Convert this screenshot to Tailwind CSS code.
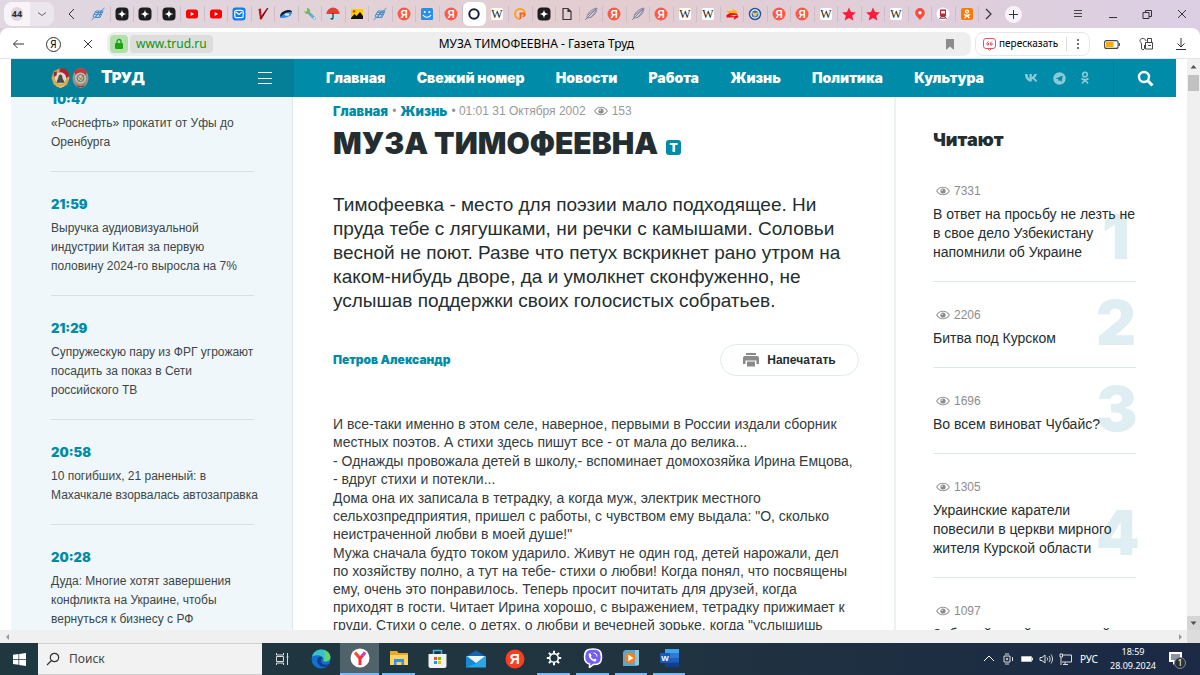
<!DOCTYPE html>
<html lang="ru">
<head>
  <meta charset="UTF-8">
  <meta name="viewport" content="width=device-width, initial-scale=1.0">
  <title>МУЗА ТИМОФЕЕВНА - Газета Труд</title>
  <script src="https://cdn.jsdelivr.net/npm/@tailwindcss/browser@4"></script>
</head>
<body class="flex h-screen flex-col overflow-hidden bg-[#dccbdc] font-['Liberation_Sans',sans-serif] text-[#242e30]">

  <!-- Иконки -->
  <svg class="hidden" xmlns="http://www.w3.org/2000/svg">
    <symbol id="i-sketch" viewBox="0 0 16 16"><g fill="none" stroke="#4a8ecb" stroke-width="1"><path d="M1.500 14 14.500 2M3 10l3-5h7l-3 6.500H4zM4 8.500h7M5 6.500h7M6 11l3-6M8.500 11.500l3-6"/></g></symbol>
    <symbol id="i-star4" viewBox="0 0 16 16"><rect x="1.500" y="1.500" width="13" height="13" rx="4" fill="#1d1d1f"/><path d="M8 3.500c.4 3 1.500 4.100 4.500 4.500-3 .4-4.100 1.500-4.500 4.500-.4-3-1.500-4.100-4.500-4.500 3-.4 4.100-1.500 4.500-4.500z" fill="#fff"/></symbol>
    <symbol id="i-youtube" viewBox="0 0 16 16"><rect x="2" y="3.500" width="12" height="9" rx="2.500" fill="#f00"/><path d="M6.700 6v4l3.300-2z" fill="#fff"/></symbol>
    <symbol id="i-mailru" viewBox="0 0 16 16"><rect x="1.500" y="1.500" width="13" height="13" rx="3" fill="#0a7cff"/><rect x="3.800" y="4.300" width="8.400" height="7.400" rx="1.500" fill="none" stroke="#fff" stroke-width="1.200"/><path d="m5 6 3 2.500L11 6" fill="none" stroke="#fff" stroke-width="1.200"/></symbol>
    <symbol id="i-v" viewBox="0 0 16 16"><path d="m3.500 3 2.500-.5.500 7L12 2l1 .5L6.500 13.500H5z" fill="#c01624"/><path d="M5.500 13 13 2" stroke="#5c0f16"/></symbol>
    <symbol id="i-whale" viewBox="0 0 16 16"><path d="M2 11c0-5 5-7 9-7 2 0 3 1 3 2-3 0-7 3-12 5z" fill="#0d1b33"/><path d="M2 12c3-5 7-6 12-6 0 4-5 6-12 6z" fill="#2b8df2"/><ellipse cx="9" cy="8.500" rx="2.500" ry="1.200" fill="#d7ecff"/></symbol>
    <symbol id="i-wrench" viewBox="0 0 16 16"><path d="m6 6 6.500 6.500" stroke="#5ab0d3" stroke-width="2.800" stroke-linecap="round"/><path d="M5 2v3L3.500 6 2.500 4.500C2 7 4 8.500 6 8l2-2c.5-2-1-4-3-4z" fill="#7bb84e"/><circle cx="12.300" cy="12.300" r="1" fill="#f3f3f3"/></symbol>
    <symbol id="i-umbrella" viewBox="0 0 16 16"><circle cx="8" cy="8" r="6.500" fill="#bfe3ee"/><path d="M1.500 8a6.500 6.500 0 0 1 13 0z" fill="#e5402e"/><path d="M8 7v5c0 1.500-2 1.500-2 0" fill="none" stroke="#3b2a2a" stroke-width="1.200"/></symbol>
    <symbol id="i-photo" viewBox="0 0 16 16"><rect x="2" y="3" width="12" height="10" fill="#ffcb00"/><path d="m2 12 3.500-4 2 2L11 6l3 4v3H2z" fill="#111"/><circle cx="5" cy="5.500" r="1.300" fill="#e33"/></symbol>
    <symbol id="i-ya" viewBox="0 0 16 16"><circle cx="8" cy="8" r="6.500" fill="#fc5a45"/><text x="8" y="11.500" text-anchor="middle" font-family="Liberation Sans" font-size="10" font-weight="700" fill="#fff">Я</text></symbol>
    <symbol id="i-smile" viewBox="0 0 16 16"><rect x="2" y="2" width="12" height="12" rx="1.500" fill="#2a8fe6"/><circle cx="5.700" cy="6" r="1" fill="#fff"/><circle cx="10.300" cy="6" r="1" fill="#fff"/><path d="M4 9c2 3 6 3 8 0" fill="none" stroke="#fff" stroke-width="1.200"/></symbol>
    <symbol id="i-ring" viewBox="0 0 16 16"><circle cx="8" cy="8" r="4.700" fill="none" stroke="#182235" stroke-width="2"/></symbol>
    <symbol id="i-wiki" viewBox="0 0 16 16"><rect x="2" y="2" width="12" height="12" rx="2" fill="#fff"/><text x="8" y="12" text-anchor="middle" font-family="Liberation Serif" font-size="12" fill="#222">W</text></symbol>
    <symbol id="i-q" viewBox="0 0 16 16"><path d="M13 7.500A5 5 0 1 0 8 13" fill="none" stroke="#ffa01f" stroke-width="2"/><path d="M13 7.500H8.500V13" fill="none" stroke="#f2641b" stroke-width="1.800"/><path d="M13 7.500c0 2.500-1 3-2.500 3" fill="none" stroke="#f2641b" stroke-width="1.600"/></symbol>
    <symbol id="i-page" viewBox="0 0 16 16"><path d="M4 2.500h5l3 3v8H4zM9 2.500v3h3" fill="none" stroke="#3c3540" stroke-width="1.200"/></symbol>
    <symbol id="i-feather" viewBox="0 0 16 16"><path d="M2 14 13 3M4 12c-.5-4 4-9 10-10-.5 6-5 10-10 10zM5 9c2-2 5-4 8-6M7 12c2-2 5-5 6-8" fill="none" stroke="#77809f" stroke-width=".9"/></symbol>
    <symbol id="i-swoosh" viewBox="0 0 16 16"><path d="M2 5h7l-1-2.500L14 6l-4 2H6z" fill="#ffb400"/><path d="M14 9H6l4 1-4 1.500H2.500V9L6 7l7 .5 1.500 3.500-5 3 1-2.500H6z" fill="#e8111a"/></symbol>
    <symbol id="i-emblem" viewBox="0 0 16 16"><circle cx="8" cy="8" r="5.500" fill="#fff" stroke="#24539b" stroke-width="1.500"/><circle cx="8" cy="8" r="3.500" fill="#3b6db5"/><path d="m5 6 3 1 3-1-1 3-2 2-2-2z" fill="#e9c46a"/></symbol>
    <symbol id="i-star" viewBox="0 0 16 16"><path d="m8 1.500 2 4.600 4.900.4-3.700 3.200 1.100 4.800L8 12l-4.300 2.500 1.100-4.800L1.100 6.500 6 6.100z" fill="#fb1b3b"/></symbol>
    <symbol id="i-pin" viewBox="0 0 16 16"><path d="M8 14.500C7.500 12 3.200 10.500 3.200 6.800a4.800 4.800 0 0 1 9.600 0C12.800 10.500 8.500 12 8 14.500z" fill="#fb4a3a"/><circle cx="8" cy="6.800" r="1.700" fill="#fff"/></symbol>
    <symbol id="i-train" viewBox="0 0 16 16"><circle cx="8" cy="8" r="6.500" fill="#fff"/><path d="M5 3.500h6V10l-1.200 1H6.200L5 10z" fill="#d0202e"/><path d="M6 5h4v2.500H6z" fill="#fff"/><path d="m6 11-1.500 2M10 11l1.500 2M5.500 12.200h5" stroke="#333" stroke-width=".9"/></symbol>
    <symbol id="i-ok" viewBox="0 0 16 16"><rect x="2" y="2" width="12" height="12" rx="2" fill="#ff7a00"/><g fill="none" stroke="#fff" stroke-width="1.300" stroke-linecap="round"><circle cx="8" cy="5.600" r="1.500"/><path d="M5.600 8.600c1.500 1 3.300 1 4.800 0M8 9.400l-2 2.300M8 9.400l2 2.300"/></g></symbol>
    <symbol id="i-eye" viewBox="0 0 14 10"><path d="M.7 5C3.500 0 10.500 0 13.300 5 10.500 10 3.500 10 .7 5z" fill="none" stroke="#999" stroke-width="1.100"/><circle cx="7" cy="5" r="2.600" fill="#8b8b8b"/><path d="M7 2.400V5H4.400" fill="#c9c9c9"/></symbol>
  </svg>

  <!-- Вкладки -->
  <div class="flex h-7 shrink-0 items-center bg-linear-to-r from-[#e0d8e2] via-[#e3cdd0] to-[#dccfe4]">
    <button class="ml-1 flex h-6 w-[26px] items-center justify-center rounded-l-lg bg-[#f8f4f8] font-['Open_Sans',sans-serif] text-[9px] font-bold"><span class="rounded-md bg-[#dfd7e0] px-px">44</span></button>
    <button class="flex h-6 w-6 items-center justify-center rounded-r-lg bg-[#ebe5ed]" aria-label="Список вкладок"><svg class="size-3" viewBox="0 0 12 12" fill="none" stroke="#666"><path d="m2 4.500 4 3 4-3"/></svg></button>
    <button class="flex w-[33px] justify-center" aria-label="Назад по вкладкам"><svg class="size-3" viewBox="0 0 12 12" fill="none" stroke="#333"><path d="M9 1 4 6l5 5"/></svg></button>
    <div id="tabs" class="flex min-w-0 flex-1 items-center"></div>
    <button class="flex w-5 justify-center" aria-label="Вперёд по вкладкам"><svg class="size-3" viewBox="0 0 12 12" fill="none" stroke="#333" stroke-width="1.200"><path d="m3 1 5 5-5 5"/></svg></button>
    <button class="ml-1.5 flex size-[17px] items-center justify-center rounded-full bg-[#f7f3f9]" aria-label="Новая вкладка"><svg class="size-[11px]" viewBox="0 0 11 11" stroke="#333"><path d="M1 5.500h9M5.500 1v9"/></svg></button>
    <div class="ml-[30px] flex w-[148px] items-center justify-between px-3">
      <button class="ml-2" aria-label="Меню"><svg class="size-3" viewBox="0 0 12 12" stroke="#444"><path d="M2 2.500h8M2 5.500h8M2 8.500h8"/></svg></button>
      <button aria-label="Свернуть"><svg class="size-3" viewBox="0 0 12 12" stroke="#333"><path d="M2 9.500h8"/></svg></button>
      <button aria-label="Развернуть"><svg class="size-3" viewBox="0 0 12 12" fill="none" stroke="#333"><path d="M2 4.500h6v6H2zM4.500 4.500v-2h6v6H8"/></svg></button>
      <button aria-label="Закрыть"><svg class="size-3" viewBox="0 0 12 12" stroke="#333"><path d="m2 2 8 8M10 2l-8 8"/></svg></button>
    </div>
  </div>

  <!-- Адресная строка -->
  <div class="flex h-[31px] shrink-0 items-center rounded-t-lg border-b border-[#e4e4e4] bg-white pt-0.5 pr-3 pl-3 font-['Noto_Sans',sans-serif] text-xs text-black">
    <button class="w-3.5" aria-label="Назад"><svg class="size-3.5" viewBox="0 0 14 14" fill="none" stroke="#333"><path d="M12 7H1.500M5.500 3l-4 4 4 4"/></svg></button>
    <button class="ml-5 flex size-[15px] items-center justify-center rounded-full border border-[#333] text-[10px] leading-none" aria-label="Яндекс">Я</button>
    <button class="ml-[21px]" aria-label="Остановить"><svg class="size-3" viewBox="0 0 12 12" stroke="#333"><path d="m2 2 8 8M10 2l-8 8"/></svg></button>
    <div class="ml-[13px] flex h-6 min-w-0 flex-1 items-center rounded-lg bg-[#eeeeee] px-[3px]">
      <button class="flex size-[18px] items-center justify-center rounded bg-[#b4dfac]" aria-label="Защищённое соединение"><svg class="size-3" viewBox="0 0 12 12"><rect x="2" y="5" width="8" height="6" rx="1" fill="#1aa312"/><path d="M4 5V3.500a2 2 0 0 1 4 0V5" fill="none" stroke="#1aa312" stroke-width="1.300"/></svg></button>
      <a href="#" class="ml-0.5 rounded bg-[#dddddd] px-1.5 leading-[18px] text-[#12920c]">www.trud.ru</a>
      <div class="flex-1 pr-[84px] text-center"><span>МУЗА ТИМОФЕЕВНА - Газета Труд</span></div>
      <button class="mr-3" aria-label="Закладка"><svg class="size-3" viewBox="0 0 12 12"><path d="M2 1h8v11L6 8.500 2 12z" fill="#8c8c8c"/></svg></button>
    </div>
    <div class="ml-1 flex h-6 w-[115px] items-center rounded-lg border border-[#e8e8e8] pl-[7px]">
      <svg class="size-[13px] shrink-0" viewBox="0 0 13 13" fill="none" stroke="#ef4f63"><rect x=".5" y=".5" width="12" height="10" rx="2.500"/><path d="m5 11 1.500 1.500L8 11M5.500 3.500 4 5v2h1.500V5M9 3.500 7.500 5v2H9V5"/></svg>
      <button class="ml-[3px] text-[10px]">пересказать</button>
      <button class="ml-2 flex h-3.5 flex-1 items-center justify-center border-l border-[#ddd]" aria-label="Ещё"><svg class="size-3" viewBox="0 0 12 12" fill="#333"><circle cx="6" cy="2" r=".9"/><circle cx="6" cy="6" r=".9"/><circle cx="6" cy="10" r=".9"/></svg></button>
    </div>
    <button class="ml-3.5" aria-label="Энергосбережение"><svg class="h-[9px] w-4" viewBox="0 0 16 9"><rect x=".6" y=".6" width="13.500" height="7.800" rx="2" fill="#fff" stroke="#444" stroke-width="1.100"/><rect x="2" y="2" width="7.500" height="5" fill="#ffa800"/><path d="M15.300 3v3" stroke="#444" stroke-width="1.200"/></svg></button>
    <button class="ml-[19px]" aria-label="Пароли"><svg class="size-3.5" viewBox="0 0 14 14" fill="none" stroke="#444"><path d="M7 4C7 1 1 .5 1 3.500c0 2 1.500 2 1.500 3.500v5L4 13l1.500-1.500V8M6.500 5.500h7v6.500h-7zM8.500 5.500v-4h4v4M9 8.500h3"/></svg></button>
    <button class="ml-[21px]" aria-label="Загрузки"><svg class="size-3.5" viewBox="0 0 14 14" fill="none" stroke="#333"><path d="M7 1v9M3.500 6.500 7 10l3.500-3.500M2 12.500h10"/></svg></button>
  </div>

  <!-- Страница и полоса прокрутки -->
  <div class="flex min-h-0 flex-1 bg-white">
    <div class="flex min-w-0 flex-1 flex-col px-[11px]">

      <header class="relative flex h-[38px] shrink-0 items-center bg-[#008ba8] text-white">
        <div class="flex h-full w-[283px] shrink-0 items-center bg-[#047f97] pr-[22px] pl-10">
          <svg class="h-6 w-[19px]" viewBox="0 0 20 24"><path d="M10 1.500 17 5l2.500 7L17 19l-7 3.500L3 19 .5 12 3 5z" fill="#d0ab52"/><path d="M9 2c6-1 10 3 10 8l-4 3-6-6z" fill="#b3222c"/><circle cx="10" cy="12" r="6" fill="#dcd9d2"/><path d="M6 17c0-3 2-4 2-7 1-3 4-2 4 1s2 3 2 6z" fill="#4a4a4a"/><path d="M5 18c3 3 7 3 10 0l-1 3-4 1.500L6 21z" fill="#e0bd60"/><path d="M3 6l3-1v4L3 11z" fill="#a3262a"/></svg>
          <svg class="ml-0.5 h-6 w-[17px]" viewBox="0 0 17 24"><ellipse cx="8.500" cy="12" rx="8" ry="10" fill="#9c8f86"/><path d="M2 6c3-5 10-5 13 0l-2 4-9-1z" fill="#c5383c"/><circle cx="8.500" cy="12" r="5.500" fill="#c7c3ba"/><circle cx="8.500" cy="12" r="3.500" fill="none" stroke="#4f6f86"/><path d="m5 10 7 5M12 9l-6 7" stroke="#a8862f"/><path d="M4 18c3 3 6 3 9 0l-2 3H6z" fill="#8d3236"/></svg>
          <a href="#" class="ml-3 font-['Inter',sans-serif] text-[17px] font-black tracking-tighter">Т<span class="text-[15px]">РУД</span></a>
          <button class="ml-auto" aria-label="Меню сайта"><svg class="h-3.5 w-3.5" viewBox="0 0 14 14" stroke="#fff"><path d="M0 1.500h14M0 7.500h14M0 12.500h14"/></svg></button>
        </div>
        <nav class="flex flex-1 justify-between pl-8 font-['Inter',sans-serif] text-[14px] leading-[18px] font-black">
          <a href="#">Главная</a>
          <a href="#">Свежий номер</a>
          <a href="#">Новости</a>
          <a href="#">Работа</a>
          <a href="#">Жизнь</a>
          <a href="#">Политика</a>
          <a href="#">Культура</a>
        </nav>
        <div class="flex w-[129px] items-center gap-3.5 pl-10 text-[#8ccad7]">
          <a href="#" aria-label="ВКонтакте"><svg class="h-3.5 w-[15px]" viewBox="0 0 15 14"><path d="M1 3h2.500c.3 2.500 1 4 2 4.500V3h2.300v3C9 5.700 9.800 4.500 10.500 3H13c-.4 1.500-1.500 3-2.600 3.900 1.300.8 2.400 2 3.100 3.600H11c-.6-1.300-1.500-2.200-3.200-2.500v2.500C3.500 10.700 1.200 7.800 1 3z" fill="currentColor"/></svg></a>
          <a href="#" aria-label="Telegram"><svg class="size-[13px]" viewBox="0 0 13 13"><circle cx="6.500" cy="6.500" r="6.200" fill="currentColor"/><path d="m2.800 6.400 7-2.900-1.200 6.300-2-1.500-1 1-.2-2z" fill="#008ba8"/></svg></a>
          <a href="#" aria-label="Одноклассники"><svg class="h-3.5 w-2.5" viewBox="0 0 10 14" fill="none" stroke="currentColor" stroke-width="1.600"><circle cx="5" cy="3.500" r="2.300"/><path d="M1.500 7.500c2 1.400 5 1.400 7 0M5 8.700 2 12.500M5 8.700l3 3.800"/></svg></a>
        </div>
        <button class="flex h-full w-[63px] items-center justify-center border-l border-[#047f97]" aria-label="Поиск по сайту"><svg class="size-[17px]" viewBox="0 0 17 17" fill="none" stroke="#fff"><circle cx="7" cy="7" r="5" stroke-width="2.400"/><path d="m11 11 4.500 4.500" stroke-width="3"/></svg></button>
      </header>

      <div class="flex min-h-0 flex-1 overflow-hidden">

        <!-- Лента новостей -->
        <aside class="w-[282px] shrink-0 overflow-hidden border-r border-[#d9e8ec] bg-[#f0f7fa] pr-[38px] pl-10">
          <ul class="-mt-[30px] text-xs leading-[19px] whitespace-nowrap text-[#3c4648]">
            <li class="border-b border-[#d7e0e3] pt-[22px] pb-[19px]"><time class="block h-[25px] font-['Inter',sans-serif] text-[13px] leading-5 font-black text-[#008ba8]">10:47</time><a href="#">«Роснефть» прокатит от Уфы до<br>Оренбурга</a></li>
            <li class="border-b border-[#d7e0e3] pt-[22px] pb-[19px]"><time class="block h-[25px] font-['Inter',sans-serif] text-[13px] leading-5 font-black text-[#008ba8]">21:59</time><a href="#">Выручка аудиовизуальной<br>индустрии Китая за первую<br>половину 2024-го выросла на 7%</a></li>
            <li class="border-b border-[#d7e0e3] pt-[22px] pb-[19px]"><time class="block h-[25px] font-['Inter',sans-serif] text-[13px] leading-5 font-black text-[#008ba8]">21:29</time><a href="#">Супружескую пару из ФРГ угрожают<br>посадить за показ в Сети<br>российского ТВ</a></li>
            <li class="border-b border-[#d7e0e3] pt-[22px] pb-[19px]"><time class="block h-[25px] font-['Inter',sans-serif] text-[13px] leading-5 font-black text-[#008ba8]">20:58</time><a href="#">10 погибших, 21 раненый: в<br>Махачкале взорвалась автозаправка</a></li>
            <li class="border-b border-[#d7e0e3] pt-[22px] pb-[19px]"><time class="block h-[25px] font-['Inter',sans-serif] text-[13px] leading-5 font-black text-[#008ba8]">20:28</time><a href="#">Дуда: Многие хотят завершения<br>конфликта на Украине, чтобы<br>вернуться к бизнесу с РФ</a></li>
          </ul>
        </aside>

        <!-- Статья -->
        <main class="min-w-0 flex-1 pr-[35px] pl-10">
          <div class="flex items-center pt-1 text-xs leading-5 text-[#999]">
            <a href="#" class="font-['Inter',sans-serif] text-[13px] font-black text-[#008ba8]">Главная</a>
            <span class="mx-1">•</span>
            <a href="#" class="font-['Inter',sans-serif] text-[13px] font-black text-[#008ba8]">Жизнь</a>
            <span class="ml-1">• 01:01 31 Октября 2002</span>
            <svg class="ml-2 h-2.5 w-3.5"><use href="#i-eye"/></svg>
            <span class="ml-1">153</span>
          </div>
          <h1 class="mt-1 flex items-end font-['Inter',sans-serif] text-[30px] leading-9 font-black whitespace-nowrap">МУЗА ТИМОФЕЕВНА
            <svg class="mb-1.5 ml-2 size-[15px]" viewBox="0 0 15 15"><rect width="15" height="15" rx="3" fill="#008ba8"/><text x="7.500" y="12" text-anchor="middle" font-family="Inter" font-size="12" font-weight="900" fill="#fff">Т</text></svg>
          </h1>
          <p class="mt-8 text-[19px] leading-6 whitespace-nowrap">Тимофеевка - место для поэзии мало подходящее. Ни<br>пруда тебе с лягушками, ни речки с камышами. Соловьи<br>весной не поют. Разве что петух вскрикнет рано утром на<br>каком-нибудь дворе, да и умолкнет сконфуженно, не<br>услышав поддержки своих голосистых собратьев.</p>
          <div class="mt-[31px] flex items-center justify-between">
            <a href="#" class="font-['Inter',sans-serif] text-xs font-black text-[#008ba8]">Петров Александр</a>
            <button class="flex h-8 w-[139px] items-center justify-center gap-2 rounded-full border border-[#dfebee] text-xs font-bold">
              <svg class="h-3.5 w-4" viewBox="0 0 16 14" fill="#8a8a8a"><path d="M3 0h10v2H3zM2 3h12a2 2 0 0 1 2 2v6h-2.500V7.500h-11V11H0V5a2 2 0 0 1 2-2z"/><path d="M4 8.500h8v5H4z"/></svg>
              Напечатать
            </button>
          </div>
          <div class="mt-[39px] flex flex-col gap-px text-[14px] leading-[18px] whitespace-nowrap text-[#333c3e]">
            <p>И все-таки именно в этом селе, наверное, первыми в России издали сборник<br>местных поэтов. А стихи здесь пишут все - от мала до велика...</p>
            <p>- Однажды провожала детей в школу,- вспоминает домохозяйка Ирина Емцова,<br>- вдруг стихи и потекли...</p>
            <p>Дома она их записала в тетрадку, а когда муж, электрик местного<br>сельхозпредприятия, пришел с работы, с чувством ему выдала: "О, сколько<br>неистраченной любви в моей душе!"</p>
            <p>Мужа сначала будто током ударило. Живут не один год, детей нарожали, дел<br>по хозяйству полно, а тут на тебе- стихи о любви! Когда понял, что посвящены<br>ему, очень это понравилось. Теперь просит почитать для друзей, когда<br>приходят в гости. Читает Ирина хорошо, с выражением, тетрадку прижимает к<br>груди. Стихи о селе, о детях, о любви и вечерней зорьке, когда "услышишь</p>
          </div>
        </main>

        <!-- Рейтинг материалов -->
        <aside class="w-[282px] shrink-0 border-l-2 border-[#eaf2f4] pr-10 pl-[37px]">
          <h2 class="pt-[30px] font-['Inter',sans-serif] text-[18px] leading-[26px] font-black">Читают</h2>
          <ol class="mt-[5px] text-[14px] leading-[19px] whitespace-nowrap">
            <li class="relative border-b border-[#dce7ea] pt-[23px] pb-[19px]">
              <span class="absolute right-0 bottom-3 w-10 text-center font-['Inter',sans-serif] text-[62px] leading-[64px] font-black text-[#deeef3]">1</span>
              <div class="relative mb-1 flex items-center gap-1 pl-[3px] text-xs leading-5 text-[#8d8d8d]"><svg class="h-2.5 w-3.5"><use href="#i-eye"/></svg>7331</div>
              <a href="#" class="relative block">В ответ на просьбу не лезть не<br>в свое дело Узбекистану<br>напомнили об Украине</a>
            </li>
            <li class="relative border-b border-[#dce7ea] pt-[23px] pb-[19px]">
              <span class="absolute right-0 bottom-3 w-10 text-center font-['Inter',sans-serif] text-[62px] leading-[64px] font-black text-[#deeef3]">2</span>
              <div class="relative mb-1 flex items-center gap-1 pl-[3px] text-xs leading-5 text-[#8d8d8d]"><svg class="h-2.5 w-3.5"><use href="#i-eye"/></svg>2206</div>
              <a href="#" class="relative block">Битва под Курском</a>
            </li>
            <li class="relative border-b border-[#dce7ea] pt-[23px] pb-[19px]">
              <span class="absolute right-0 bottom-3 w-10 text-center font-['Inter',sans-serif] text-[62px] leading-[64px] font-black text-[#deeef3]">3</span>
              <div class="relative mb-1 flex items-center gap-1 pl-[3px] text-xs leading-5 text-[#8d8d8d]"><svg class="h-2.5 w-3.5"><use href="#i-eye"/></svg>1696</div>
              <a href="#" class="relative block">Во всем виноват Чубайс?</a>
            </li>
            <li class="relative border-b border-[#dce7ea] pt-[23px] pb-[19px]">
              <span class="absolute right-0 bottom-3 w-10 text-center font-['Inter',sans-serif] text-[62px] leading-[64px] font-black text-[#deeef3]">4</span>
              <div class="relative mb-1 flex items-center gap-1 pl-[3px] text-xs leading-5 text-[#8d8d8d]"><svg class="h-2.5 w-3.5"><use href="#i-eye"/></svg>1305</div>
              <a href="#" class="relative block">Украинские каратели<br>повесили в церкви мирного<br>жителя Курской области</a>
            </li>
            <li class="relative pt-[23px] pb-[19px]">
              <div class="relative mb-1 flex items-center gap-1 pl-[3px] text-xs leading-5 text-[#8d8d8d]"><svg class="h-2.5 w-3.5"><use href="#i-eye"/></svg>1097</div>
              <a href="#" class="relative block">Забытый герой московской</a>
            </li>
          </ol>
        </aside>
      </div>
    </div>

    <div class="flex w-[13px] shrink-0 flex-col items-center bg-[#f0f0f0]">
      <svg class="h-4 w-[13px]" viewBox="0 0 13 16"><path d="m3.500 9.500 3-3.500 3 3.500z" fill="#505050"/></svg>
      <div class="h-4 w-[11px] bg-[#c1c1c1]"></div>
      <svg class="mt-auto h-3.5 w-[13px] bg-[#d5d5d5]" viewBox="0 0 13 14"><path d="m3.500 5.500 3 3.500 3-3.500z" fill="#505050"/></svg>
    </div>
  </div>

  <div class="flex h-[13px] shrink-0 items-center justify-between bg-[#f0f0f0] pl-1">
    <svg class="size-2" viewBox="0 0 8 8"><path d="M5 1 2 4l3 3z" fill="#999"/></svg>
    <div class="flex h-full items-center"><svg class="mr-0.5 size-2" viewBox="0 0 8 8"><path d="m2 1 3 3-3 3z" fill="#999"/></svg><div class="h-full w-[13px] bg-[#dcdcdc]"></div></div>
  </div>

  <!-- Панель задач -->
  <div class="flex h-8 shrink-0 items-stretch bg-linear-to-r from-[#1f3840] via-[#20343f] to-[#1b2945] font-['Noto_Sans',sans-serif] text-white">
    <button class="flex w-[38px] items-center justify-center" aria-label="Пуск"><svg class="size-[13px]" viewBox="0 0 13 13" fill="#fff"><path d="M0 1.800 5.500 1v5H0zM6.200.9 13 0v6H6.200zM0 6.800h5.500v5L0 11.100zM6.200 6.800H13V13l-6.800-1z"/></svg></button>
    <label class="flex w-56 items-center border-y border-[#d0d0d0] bg-[#f2f2f2] pl-2">
      <svg class="size-3.5" viewBox="0 0 14 14" fill="none" stroke="#333" stroke-width="1.200"><circle cx="8.500" cy="5.500" r="4.200"/><path d="M5.500 8.500 1 13"/></svg>
      <input type="text" aria-label="Поиск" placeholder="Поиск" class="ml-[9px] w-40 bg-transparent text-xs outline-none placeholder:text-[#444]">
    </label>
    <button class="flex w-[39px] items-center justify-center" aria-label="Представление задач"><svg class="size-3.5" viewBox="0 0 14 14" fill="none" stroke="#ddd"><path d="M1.500 1v2h7V1M1.500 4.500h7v5h-7zM1.500 13v-2h7v2M12.500 1v12M11.500 5h2"/></svg></button>
    <button class="flex w-[39px] items-center justify-center" aria-label="Edge"><svg class="size-5" viewBox="0 0 20 20"><circle cx="10" cy="10" r="9.500" fill="#1470cf"/><path d="M1 8C2 3 6 .5 10.500.5 16 .5 20 5 19.300 9c-.5 3-4 4-7 3 1-2 0-5-4-5.500C5 6 2 7 1 8z" fill="#36c4c8"/><path d="M13 1c4 1 7 5 6.300 8-.5 3-4 4-7 3 2-3 2-7 .7-11z" fill="#5fd668"/><path d="M7 9c-2 3 0 8 5 9 3 0 5-1 6-3-4 2-8 0-8-3 0-2 1-2 1-3-1-2-3-1-4 0z" fill="#0b3f92"/></svg></button>
    <button class="flex w-[39px] items-center justify-center border-b-2 border-[#7ab9f5] bg-[#50636a]" aria-label="Яндекс Браузер"><svg class="size-5" viewBox="0 0 20 20"><circle cx="10" cy="10" r="9.500" fill="#fff"/><path d="m5 4.500 5 6" stroke="#ff4a2a" stroke-width="3"/><path d="M15 4.500 10 10.500V17" fill="none" stroke="#fa2d40" stroke-width="3"/><path d="m15 4.500-3 3.600" stroke="#d83bd6" stroke-width="3"/></svg></button>
    <button class="mx-[3px] flex w-[33px] items-center justify-center border-b-2 border-[#7ab9f5]" aria-label="Проводник"><svg class="h-4 w-[18px]" viewBox="0 0 18 16"><path d="M0 1h7l1.500 2H18v12H0z" fill="#e9a825"/><path d="M0 5h18v10H0z" fill="#fcd462"/><path d="M4 15V9h10v6h-2.500v-3h-5v3z" fill="#3b8fe0"/></svg></button>
    <button class="flex w-[38px] items-center justify-center" aria-label="Магазин"><svg class="h-5 w-[19px]" viewBox="0 0 19 20"><path d="M5.500 6V1.500h8V6" fill="none" stroke="#37b5e8" stroke-width="1.500"/><path d="M.5 5h18v12a2 2 0 0 1-2 2h-14a2 2 0 0 1-2-2z" fill="#f2f2f2"/><path d="M6 8h3v3H6z" fill="#f25022"/><path d="M10 8h3v3h-3z" fill="#7fba00"/><path d="M6 12h3v3H6z" fill="#00a4ef"/><path d="M10 12h3v3h-3z" fill="#ffb900"/></svg></button>
    <button class="flex w-[39px] items-center justify-center" aria-label="Почта"><svg class="h-[18px] w-5" viewBox="0 0 20 18"><path d="m0 6.500 10-6 10 6z" fill="#1465b5"/><path d="M0 6h20v11.500H0z" fill="#2aa5ea"/><path d="m1 6h18l-9 7z" fill="#eef3f7"/><path d="m0 6 10 7.500L0 17.500z" fill="#1887d8"/></svg></button>
    <button class="flex w-[39px] items-center justify-center" aria-label="Яндекс"><svg class="size-5" viewBox="0 0 20 20"><circle cx="10" cy="10" r="9.500" fill="#fc3f1d"/><text x="9.800" y="15" text-anchor="middle" font-family="Liberation Sans" font-size="14" font-weight="700" fill="#fff">Я</text></svg></button>
    <button class="mx-[3px] flex w-[33px] items-center justify-center border-b-2 border-[#7ab9f5]" aria-label="Параметры"><svg class="size-4" viewBox="0 0 16 16" fill="none" stroke="#fff"><circle cx="8" cy="8" r="4.300" stroke-width="1.600"/><path d="M8 .8v2.700M8 12.500v2.700M.8 8h2.700M12.500 8h2.700M2.900 2.900l1.900 1.900M11.200 11.200l1.900 1.900M2.900 13.100l1.900-1.900M11.200 4.800l1.900-1.900" stroke-width="2"/></svg></button>
    <button class="mx-[3px] flex w-[33px] items-center justify-center border-b-2 border-[#7ab9f5]" aria-label="Viber"><svg class="size-5" viewBox="0 0 20 20"><path d="M10 1c6 0 8.500 1.800 8.500 8S16 16.500 10.500 16.500L6.500 19.500V16C2.500 15 1.500 13 1.500 9 1.500 2.800 4 1 10 1z" fill="#7360f2" stroke="#fff" stroke-width="1.500"/><path d="M6 5.500c1.500-1 2 1 2.500 2-1 1-.5 2 2 4 1-1.500 3-.5 3 .5-1 2.500-3 1.500-5 0S5 7 6 5.500z" fill="#fff"/><path d="M10.500 5c2 0 3.500 1.500 3.500 3.500" fill="none" stroke="#fff"/></svg></button>
    <button class="mx-[3px] flex w-8 items-center justify-center border-b-2 border-[#7ab9f5]" aria-label="Проигрыватель"><svg class="h-4 w-4" viewBox="0 0 16 16"><path d="M2 0h12l2 2v13l-2 1H0V2z" fill="#5aa7cc"/><path d="M12 0h4v15h-4z" fill="#8fc7df"/><circle cx="7" cy="8" r="5.500" fill="#f5821f"/><path d="M5.300 4.800v6.400L10.500 8z" fill="#fff"/></svg></button>
    <button class="mx-[3px] flex w-8 items-center justify-center border-b-2 border-[#7ab9f5]" aria-label="Word"><svg class="h-[18px] w-[19px]" viewBox="0 0 19 18"><path d="M5 0h14v18H5z" fill="#1d5dbb"/><path d="M5 0h14v4.500H5z" fill="#41a5ee"/><path d="M5 4.500h14V9H5z" fill="#2b7cd3"/><path d="M5 13.500h14V18H5z" fill="#103f91"/><rect y="4" width="10" height="10" rx="1" fill="#185abd"/><text x="5" y="12" text-anchor="middle" font-family="Liberation Sans" font-size="8" font-weight="700" fill="#fff">W</text></svg></button>

    <div class="ml-auto flex items-center pr-4 text-[9px]">
      <button aria-label="Скрытые значки"><svg class="size-3" viewBox="0 0 12 12" fill="none" stroke="#fff"><path d="m1 8 5-5 5 5"/></svg></button>
      <svg class="ml-[7px] size-3" viewBox="0 0 12 12" fill="none" stroke="#ddd"><path d="M2 3h6v6H2zM3 1h4M3 11h4M10.500 4v4"/><circle cx="5" cy="6" r=".8"/></svg>
      <svg class="ml-[7px] size-3" viewBox="0 0 12 12"><path d="M.5 3.500h10v5H.5zM11 5h1v2h-1z" fill="#fff" stroke="#ddd" stroke-width=".6"/></svg>
      <svg class="ml-1.5 h-3 w-3.5" viewBox="0 0 14 12" fill="none" stroke="#ddd"><path d="M1 4.500h2l3-2.500v8L3 7.500H1zM8 4.500c.8 1 .8 2 0 3M10 3c1.500 2 1.500 4 0 6M12 1.500c2 3 2 6 0 9"/></svg>
      <svg class="ml-1.5 size-[13px]" viewBox="0 0 13 13" fill="none" stroke="#ddd"><path d="M3.500 2h9v7H3M6 9v2.500M4 11.500h5M1 1h2.500v3H1zM2 4v8"/></svg>
      <span class="ml-2 text-[10px]">РУС</span>
      <div class="ml-3 text-center leading-[14px]">18:59<br>28.09.2024</div>
      <button class="relative ml-3" aria-label="Уведомления"><svg class="size-4" viewBox="0 0 16 16"><path d="M1 1h13v10H8l-3 3v-3H1z" fill="#fff"/><path d="M3 4h9M3 6h9M3 8h6" stroke="#1b2945"/></svg><span class="absolute top-1.5 left-1.5 size-3 rounded-full border border-[#888] bg-[#26303c] text-center text-[9px] leading-[10px]">1</span></button>
    </div>
  </div>

  <script>
    // Значки открытых вкладок слева направо
    const TABS = [
      'sketch', 'star4', 'star4', 'star4', 'youtube', 'youtube', 'mailru', 'v', 'whale', 'wrench',
      'umbrella', 'photo', 'sketch', 'ya', 'smile', 'ya', 'ring', 'wiki', 'q', 'star4',
      'page', 'feather', 'ya', 'feather', 'ya', 'wiki', 'wiki', 'swoosh', 'emblem', 'ya',
      'ya', 'wiki', 'star', 'star', 'wiki', 'pin', 'train', 'ok'
    ];
    const ACTIVE = 16;

    document.getElementById('tabs').innerHTML = TABS.map((name, i) => `
      <button aria-label="Вкладка ${i + 1}" class="${i === ACTIVE
        ? 'flex h-6 min-w-0 flex-1 items-center justify-center rounded-md bg-white'
        : 'flex h-4 min-w-0 flex-1 items-center justify-center border-r border-[#cdbfc9]'}">
        <svg class="size-4 shrink-0"><use href="#i-${name}"/></svg>
      </button>`).join('');
  </script>
</body>
</html>
